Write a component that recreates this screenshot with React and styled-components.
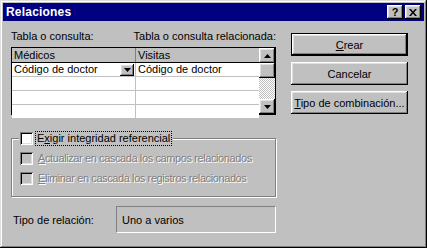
import React from "react";
import styled, { createGlobalStyle } from "styled-components";

const GlobalStyle = createGlobalStyle`
  html, body { margin: 0; padding: 0; background: #c0c0c0; }
  body { font-family: "Liberation Sans", Arial, sans-serif; font-size: 11px; color: #000; }
`;

const bevel = `
  box-shadow: inset -1px -1px #000, inset 1px 1px #fff, inset -2px -2px #808080, inset 2px 2px #dfdfdf;
`;

const Window = styled.div`
  width: 427px;
  height: 248px;
  box-sizing: border-box;
  padding: 3px;
  background: #c0c0c0;
  box-shadow: inset -1px -1px #000, inset 1px 1px #dfdfdf, inset -2px -2px #808080, inset 2px 2px #fff;
  display: flex;
  flex-direction: column;
  overflow: hidden;
`;

const TitleBar = styled.div`
  height: 18px;
  background: #000080;
  color: #fff;
  display: flex;
  align-items: center;
  justify-content: space-between;
  padding: 0 3px 0 3px;
`;

const Title = styled.span`
  font-weight: bold;
  font-size: 12px;
  letter-spacing: 0.2px;
`;

const TitleButtons = styled.div`
  display: flex;
  gap: 2px;
`;

const TitleButton = styled.div`
  width: 16px;
  height: 14px;
  box-sizing: border-box;
  background: #c0c0c0;
  color: #000;
  display: flex;
  align-items: center;
  justify-content: center;
  font-weight: bold;
  font-size: 11px;
  ${bevel}
`;

const Body = styled.div`
  display: flex;
  padding: 9px 0 0 8px;
`;

const LeftCol = styled.div`
  width: 265px;
  display: flex;
  flex-direction: column;
`;

const Labels = styled.div`
  display: flex;
  line-height: 13px;
`;

const Label = styled.span`
  width: ${({ $w }) => ($w ? `${$w}px` : "auto")};
  white-space: nowrap;
`;

const Table = styled.div`
  margin-top: 4px;
  height: 68px;
  box-sizing: border-box;
  border: 1px solid #000;
  background: #fff;
  display: flex;
`;

const Columns = styled.div`
  flex: 1;
  display: flex;
  flex-direction: column;
`;

const Row = styled.div`
  display: grid;
  grid-template-columns: 124px 1fr;
  height: ${({ $head }) => ($head ? 14 : 13)}px;
  background: ${({ $head }) => ($head ? "#c0c0c0" : "#fff")};
  border-bottom: 1px solid ${({ $head }) => ($head ? "#000" : "#c0c0c0")};
  flex-shrink: 0;
`;

const Cell = styled.div`
  box-sizing: border-box;
  padding-left: 2px;
  line-height: ${({ $head }) => ($head ? 14 : 13)}px;
  display: flex;
  align-items: center;
  justify-content: space-between;
  white-space: nowrap;
  overflow: hidden;
  &:first-child {
    border-right: 1px solid ${({ $head }) => ($head ? "#808080" : "#c0c0c0")};
  }
`;

const DropButton = styled.div`
  width: 14px;
  height: 12px;
  box-sizing: border-box;
  background: #c0c0c0;
  margin-right: 1px;
  display: flex;
  align-items: center;
  justify-content: center;
  ${bevel}
`;

const Scrollbar = styled.div`
  width: 16px;
  display: flex;
  flex-direction: column;
  flex-shrink: 0;
`;

const ScrollButton = styled.div`
  height: 15px;
  box-sizing: border-box;
  background: #c0c0c0;
  display: flex;
  align-items: center;
  justify-content: center;
  flex-shrink: 0;
  ${bevel}
`;

const Track = styled.div`
  flex: 1;
  background: repeating-conic-gradient(#c0c0c0 0 25%, #fff 0 50%) 0 0 / 2px 2px;
`;

const Group = styled.fieldset`
  margin: 17px 0 0;
  padding: 7px 8px 11px 7px;
  border: 1px solid #808080;
  box-shadow: inset 1px 1px #fff, 1px 1px #fff;
  min-width: 0;
  display: flex;
  flex-direction: column;
  gap: 7px;
`;

const Legend = styled.legend`
  padding: 0 2px 0 1px;
  background: #c0c0c0;
  display: flex;
  align-items: center;
  gap: 3px;
  line-height: 13px;
`;

const Check = styled.div`
  width: 13px;
  height: 13px;
  box-sizing: border-box;
  flex-shrink: 0;
  background: ${({ $disabled }) => ($disabled ? "#c0c0c0" : "#fff")};
  box-shadow: inset 1px 1px #808080, inset -1px -1px #fff, inset 2px 2px #000, inset -2px -2px #dfdfdf;
`;

const CheckRow = styled.div`
  display: flex;
  align-items: center;
  gap: 4px;
  padding-left: 1px;
  height: 13px;
`;

const CheckText = styled.span`
  white-space: nowrap;
  line-height: 13px;
  padding: 0 1px;
  color: ${({ $disabled }) => ($disabled ? "#808080" : "#000")};
  text-shadow: ${({ $disabled }) => ($disabled ? "1px 1px 0 #fff" : "none")};
  letter-spacing: ${({ $disabled }) => ($disabled ? "-0.4px" : "0")};
  outline: ${({ $focus }) => ($focus ? "1px dotted #000" : "none")};
`;

const U = styled.span`
  text-decoration: underline;
`;

const Relation = styled.div`
  display: flex;
  align-items: center;
  margin-top: 9px;
`;

const RelationLabel = styled.span`
  width: 105px;
  padding-left: 2px;
  box-sizing: border-box;
  white-space: nowrap;
`;

const RelationBox = styled.div`
  width: 160px;
  height: 27px;
  box-sizing: border-box;
  border: 1px solid;
  border-color: #808080 #fff #fff #808080;
  display: flex;
  align-items: center;
  padding-left: 5px;
`;

const RightCol = styled.div`
  margin-left: 15px;
  padding-top: 3px;
  display: flex;
  flex-direction: column;
  gap: 6px;
`;

const Button = styled.div`
  width: 117px;
  height: 23px;
  box-sizing: border-box;
  background: #c0c0c0;
  display: flex;
  align-items: center;
  justify-content: center;
  white-space: nowrap;
  border: ${({ $default }) => ($default ? "1px solid #000" : "none")};
  ${bevel}
`;

const Arrow = ({ down }) => (
  <svg width="7" height="4" viewBox="0 0 7 4">
    <path d={down ? "M0 0H7L3.5 4Z" : "M0 4H7L3.5 0Z"} fill="#000" />
  </svg>
);

const CloseGlyph = () => (
  <svg width="8" height="7" viewBox="0 0 8 7">
    <path d="M0 0h2l2 2.5L6 0h2L5 3.5 8 7H6L4 4.5 2 7H0l3-3.5z" fill="#000" />
  </svg>
);

export default function App() {
  return (
    <>
      <GlobalStyle />
      <Window>
        <TitleBar>
          <Title>Relaciones</Title>
          <TitleButtons>
            <TitleButton>?</TitleButton>
            <TitleButton><CloseGlyph /></TitleButton>
          </TitleButtons>
        </TitleBar>
        <Body>
          <LeftCol>
            <Labels>
              <Label $w={125}>Tabla o consulta:</Label>
              <Label>Tabla o consulta relacionada:</Label>
            </Labels>
            <Table>
              <Columns>
                <Row $head>
                  <Cell $head>Médicos</Cell>
                  <Cell $head>Visitas</Cell>
                </Row>
                <Row>
                  <Cell>
                    Código de doctor
                    <DropButton><Arrow down /></DropButton>
                  </Cell>
                  <Cell>Código de doctor</Cell>
                </Row>
                <Row><Cell /><Cell /></Row>
                <Row><Cell /><Cell /></Row>
                <Row><Cell /><Cell /></Row>
              </Columns>
              <Scrollbar>
                <ScrollButton><Arrow /></ScrollButton>
                <ScrollButton />
                <Track />
                <ScrollButton><Arrow down /></ScrollButton>
              </Scrollbar>
            </Table>
            <Group>
              <Legend>
                <Check />
                <CheckText $focus>E<U>x</U>igir integridad referencial</CheckText>
              </Legend>
              <CheckRow>
                <Check $disabled />
                <CheckText $disabled><U>A</U>ctualizar en cascada los campos relacionados</CheckText>
              </CheckRow>
              <CheckRow>
                <Check $disabled />
                <CheckText $disabled><U>E</U>liminar en cascada los registros relacionados</CheckText>
              </CheckRow>
            </Group>
            <Relation>
              <RelationLabel>Tipo de relación:</RelationLabel>
              <RelationBox>Uno a varios</RelationBox>
            </Relation>
          </LeftCol>
          <RightCol>
            <Button $default><span><U>C</U>rear</span></Button>
            <Button>Cancelar</Button>
            <Button><span><U>T</U>ipo de combinación...</span></Button>
          </RightCol>
        </Body>
      </Window>
    </>
  );
}
